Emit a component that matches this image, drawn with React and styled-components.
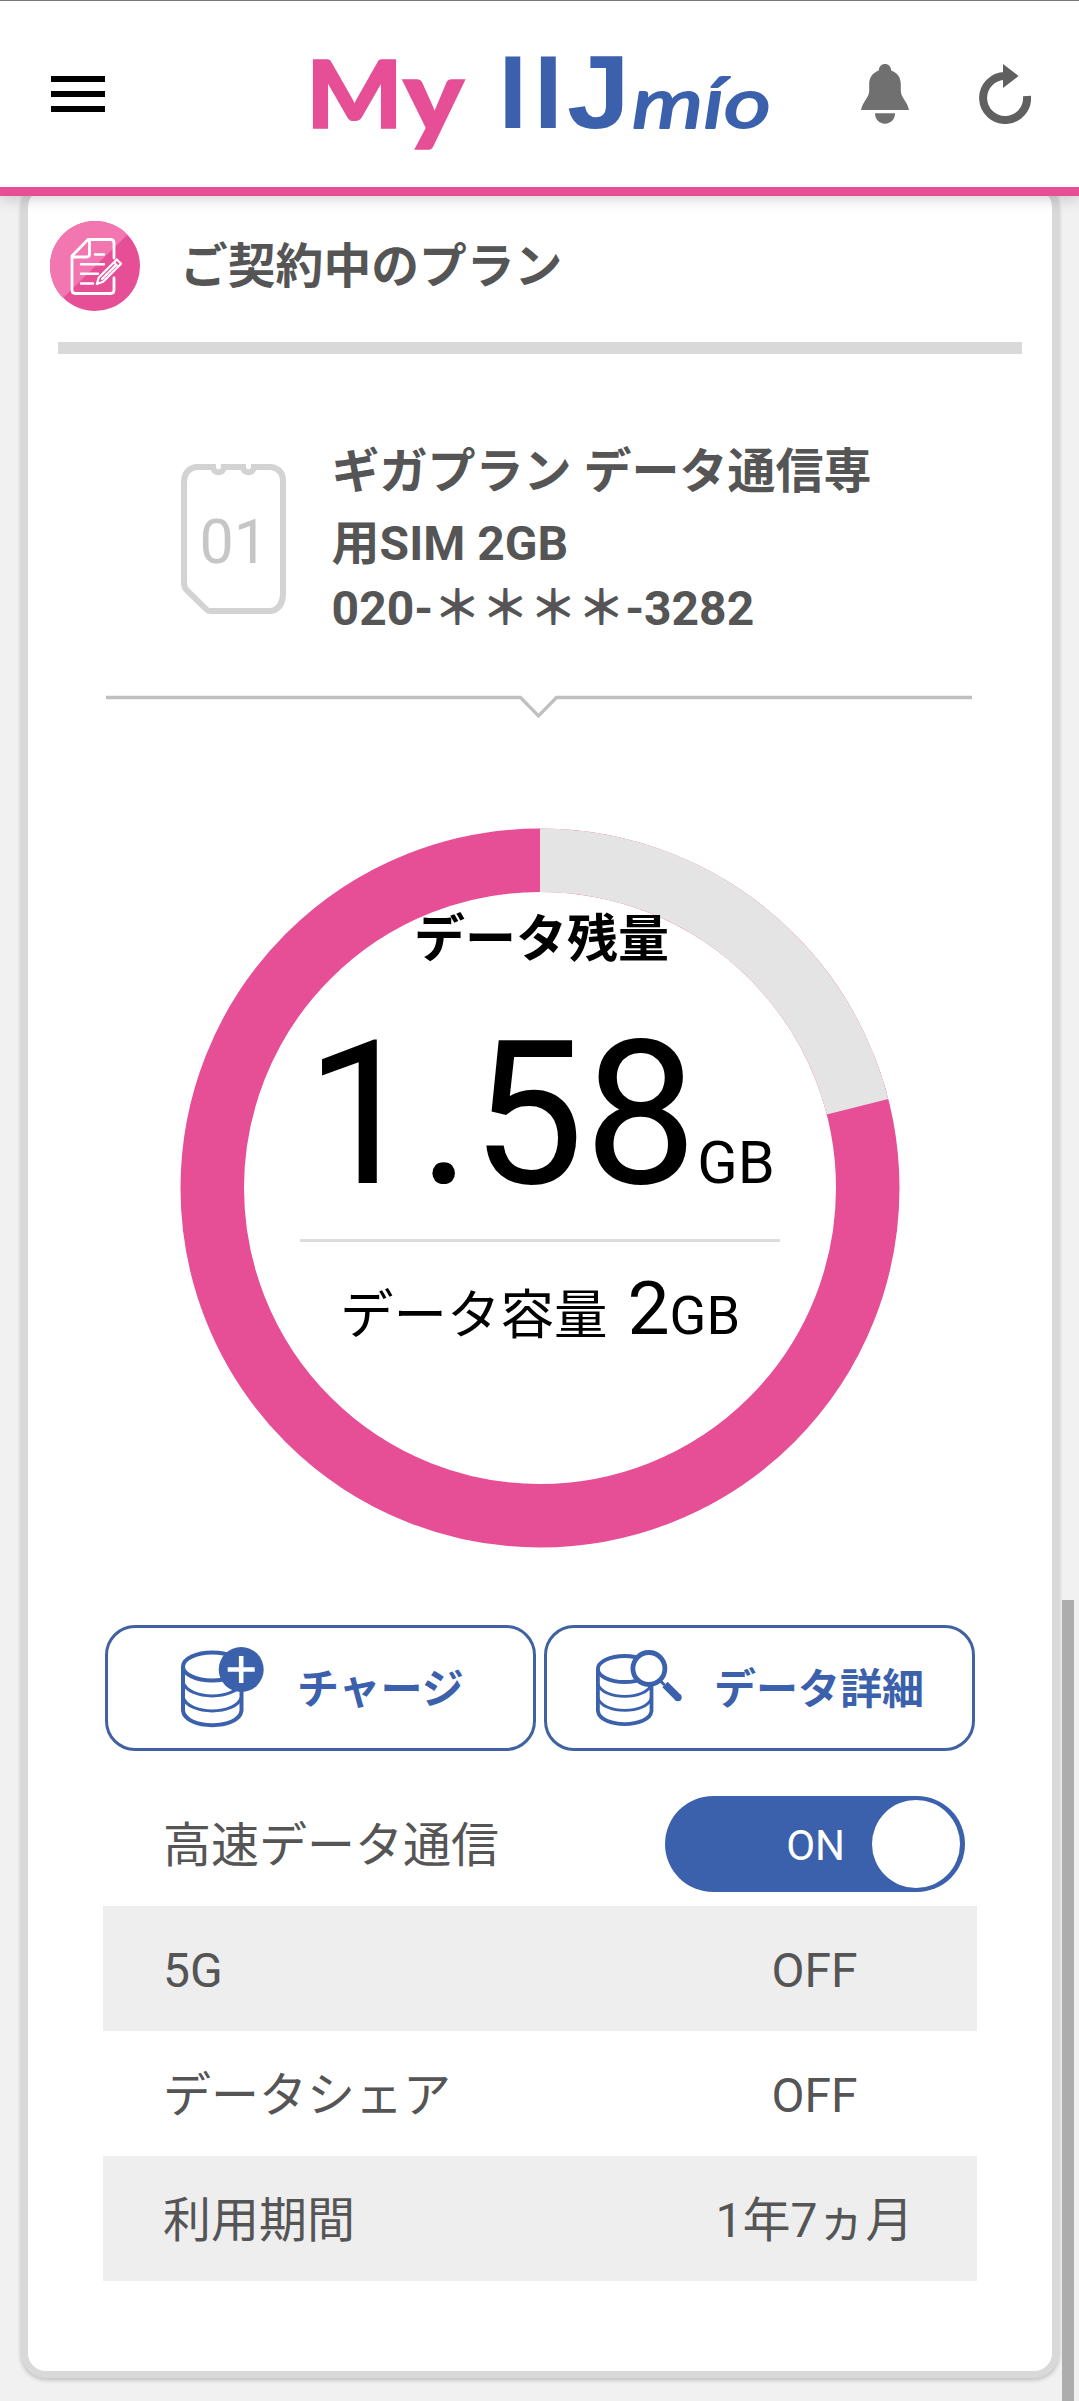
import React from 'react'
import styled, { createGlobalStyle } from "styled-components";


const rows = [
  { label: "5G", value: "OFF", shaded: true },
  { label: "データシェア", value: "OFF", shaded: false },
  { label: "利用期間", value: "1年7ヵ月", shaded: true },
]

const total = 2
const remain = 1.58
const ringRadius = 327.75
const ringLength = 2 * Math.PI * ringRadius
const usedLength = ringLength * (1 - remain / total)


function Logo() {
  return (
    <svg width="500" height="160" viewBox="290 14 500 160" role="img" aria-label="My IIJmio">
      <StLogoText x="306" y="128" fontSize="94" textLength="97" lengthAdjust="spacingAndGlyphs">M</StLogoText>
      <StLogoText x="403" y="132" fontSize="101" textLength="61" lengthAdjust="spacingAndGlyphs">y</StLogoText>
      <StLogoBlockText x="498.500 534" y="128" fontSize="103">II</StLogoBlockText>
      <StLogoBlockText x="567" y="128" fontSize="103" textLength="63" lengthAdjust="spacingAndGlyphs">J</StLogoBlockText>
      <StLogoScriptText x="632" y="128" fontSize="70" textLength="139" lengthAdjust="spacingAndGlyphs">mío</StLogoScriptText>
    </svg>
  )
}

function BellIcon() {
  return (
    <svg width="48" height="60" viewBox="0 0 48 60" fill="#707070">
      <path d="M24 0c-3.600 0-6 2.600-6.200 6.400C11.500 8.600 8.200 13.500 8.200 20v6c0 4-1.200 6.300-3.200 9.200C2.500 38.800.8 42 0 46h48c-.8-4-2.500-7.200-5-10.800-2-2.900-3.200-5.200-3.200-9.200v-6c0-6.500-3.300-11.400-9.600-13.600C30 2.600 27.600 0 24 0z" />
      <path d="M14 49.300h20c0 6-4.300 10.400-10 10.400s-10-4.400-10-10.400z" />
    </svg>
  )
}

function ReloadIcon() {
  return (
    <svg width="52" height="60" viewBox="0 0 52 60">
      <path d="M48 32A22 22 0 1 1 26 12" fill="none" stroke="#606060" strokeWidth="8" />
      <path d="M24 0l15.500 12L24 24z" fill="#606060" />
    </svg>
  )
}

function ContractIcon() {
  return (
    <svg width="90" height="90" viewBox="0 0 90 90">
      <circle cx="45" cy="45" r="45" fill="#e64e96" />
      <path d="M13 77A45 45 0 0 1 77.500 13.500z" fill="#f277b0" />
      <g fill="none" stroke="#fff" strokeWidth="2.800" strokeLinejoin="round" strokeLinecap="round">
        <path d="M64 37V22q0-3.500-3.500-3.500H38L22 35v34q0 3.500 3.500 3.500h35q3.500 0 3.500-3.500V57" />
        <path d="M39.500 19.500V33q0 3-3 3H23" />
        <path d="M45 33.500h9M31 43.300h23M31 52.700h17M31 62.500h12" strokeWidth="2.400" />
        <path d="M46.800 63l2-6.500 18-18 4.300 4.300-18 18zM64 41.500l4.200 4.200M52 58l13-13" strokeWidth="2.200" />
      </g>
    </svg>
  )
}

function SimIcon() {
  return (
    <svg width="105" height="150" viewBox="0 0 105 150">
      <path d="M15 3h17c0 7 11 7 11 0h19c0 7 11 7 11 0h17q12 2 12 14v114q-1 14-12 16H29q-2 0-3.500-1.500L5.500 126Q3 123 3 119V17Q4 5 15 3z" fill="none" stroke="#d3d3d3" strokeWidth="6" />
      <StSimText x="18.500" y="99">01</StSimText>
    </svg>
  )
}

function ChargeIcon() {
  return (
    <svg width="83" height="82" viewBox="0 0 83 82">
      <g fill="none" stroke="#3b61ad" strokeWidth="4">
        <ellipse cx="31.300" cy="19.500" rx="29.300" ry="14" />
        <path d="M2 19.500v44C4 83 58.500 83 60.500 63.500v-44" />
        <path d="M2 35c5 18.500 53.500 18.500 58.500 0M2 50c5 18.500 53.500 18.500 58.500 0" strokeWidth="3" />
      </g>
      <circle cx="60.200" cy="22.500" r="22.500" fill="#3b61ad" />
      <path d="M60.200 9v27M46.700 22.500h27" stroke="#fff" strokeWidth="4.600" />
    </svg>
  )
}

function DetailIcon() {
  return (
    <svg width="86" height="77" viewBox="0 0 86 77">
      <g fill="none" stroke="#3b61ad" strokeWidth="3.800">
        <ellipse cx="28.700" cy="19" rx="26.800" ry="13" />
        <path d="M1.900 19v42C3.900 78.500 53.500 78.500 55.500 61V19" />
        <path d="M1.900 34c5 16.500 48.600 16.500 53.600 0M1.900 48c5 16.500 48.600 16.500 53.600 0" strokeWidth="2.800" />
      </g>
      <circle cx="52.900" cy="18.500" r="16" fill="#fff" stroke="#3b61ad" strokeWidth="4.800" />
      <path d="M63.500 30l5 5" stroke="#3b61ad" strokeWidth="3" />
      <path d="M69 34.500l13.500 13.500" stroke="#3b61ad" strokeWidth="7.500" />
      <circle cx="82" cy="47.500" r="3.700" fill="#3b61ad" />
    </svg>
  )
}

function App() {
  return (
    <StPage>
      <GlobalStyle />
      <StHeader>
        <StMenuButton aria-label="メニュー"><StMenuBar /><StMenuBar /><StMenuBar /></StMenuButton>
        <StLogoBox><Logo /></StLogoBox>
        <StHeaderIcons>
          <BellIcon />
          <ReloadIcon />
        </StHeaderIcons>
      </StHeader>
      <StCard>
        <StCardTitle>
          <ContractIcon />
          <StH2>ご契約中のプラン</StH2>
        </StCardTitle>
        <StTitleRule />
        <StPlan>
          <StSimBox><SimIcon /></StSimBox>
          <div>
            <StPlanName>ギガプラン データ通信専<br />用SIM 2GB</StPlanName>
            <StPlanNumber>020-＊＊＊＊-3282</StPlanNumber>
          </div>
        </StPlan>
        <StNotchLine viewBox="0 0 866 26">
          <path d="M0 3.500h414.500l18 18.500 18-18.500H866" fill="none" stroke="#c0c0c0" strokeWidth="3.300" />
        </StNotchLine>
        <StMeter>
          <StRing viewBox="0 0 720 720">
            <circle cx="360" cy="360" r={ringRadius} fill="none" stroke="#e64e96" strokeWidth="63.500" />
            <circle cx="360" cy="360" r={ringRadius} fill="none" stroke="#e4e4e4" strokeWidth="63.500" strokeDasharray={`${usedLength} ${ringLength}`} transform="rotate(-90 360 360)" />
          </StRing>
          <StMeterBody>
            <StRemainLabel>データ残量</StRemainLabel>
            <StRemain>{remain}<StUnit $size="59.500px" $gap="0">GB</StUnit></StRemain>
            <StMeterRule />
            <StCapacity><StCapacityLabel>データ容量</StCapacityLabel>{total}<StUnit $size="54px" $gap="0">GB</StUnit></StCapacity>
          </StMeterBody>
        </StMeter>
        <StButtons>
          <StButton $pad="73px" $gap="33px"><ChargeIcon /><StButtonText>チャージ</StButtonText></StButton>
          <StButton $pad="49px" $gap="32px"><DetailIcon /><StButtonText>データ詳細</StButtonText></StButton>
        </StButtons>
        <StTable>
          <StRow>
            <StRowLabel>高速データ通信</StRowLabel>
            <StToggle role="switch" aria-checked="true"><StToggleText>ON</StToggleText><StKnob /></StToggle>
          </StRow>
          {rows.map((row) => (
            <StRow key={row.label} $shaded={row.shaded}>
              <StRowLabel>{row.label}</StRowLabel>
              <StRowValue>{row.value}</StRowValue>
            </StRow>
          ))}
        </StTable>
      </StCard>
      <StScrollThumb />
    </StPage>
  )
}


const GlobalStyle = createGlobalStyle`
  * {
    box-sizing: border-box;
  }
  body {
    margin: 0;
    background-color: #f1f1f1;
    font-family: Roboto, "Noto Sans CJK JP", sans-serif;
  }
  svg {
    display: block;
    flex-shrink: 0;
  }
`
const StPage = styled.div`
  position: relative;
  height: 2401px;
  overflow: hidden;
  color: #555;
`
const StHeader = styled.header`
  position: relative;
  z-index: 1;
  display: flex;
  align-items: center;
  height: 196px;
  padding: 0 48px 0 51px;
  background-color: #fff;
  border-top: 1px solid #777;
  border-bottom: 9px solid #e64e96;
  box-shadow: 0 3px 14px rgba(0, 0, 0, 0.18);
`
const StMenuButton = styled.button`
  display: flex;
  flex-direction: column;
  gap: 9px;
  width: 54px;
  padding: 0;
  border: 0;
  background: none;
`
const StMenuBar = styled.span`
  height: 6px;
  background-color: #000;
`
const StLogoBox = styled.div`
  margin-left: 185px;
`
const StLogoText = styled.text`
  font-family: Lato, sans-serif;
  font-weight: 900;
  fill: #e64e96;
  stroke: #e64e96;
  stroke-width: 1.5px;
`
const StLogoBlockText = styled.text`
  font-family: "Liberation Sans", sans-serif;
  font-weight: bold;
  fill: #3b61ad;
`
const StLogoScriptText = styled.text`
  font-family: Lato, sans-serif;
  font-weight: 400;
  font-style: italic;
  fill: #3b61ad;
  stroke: #3b61ad;
  stroke-width: 2px;
  stroke-linejoin: round;
`
const StHeaderIcons = styled.div`
  display: flex;
  gap: 70px;
  margin-left: auto;
`
const StCard = styled.section`
  width: 1038px;
  height: 2194px;
  margin: -14px 0 0 21px;
  padding-top: 2px;
  border: 7px solid #d9d9d9;
  border-radius: 25px;
  background-color: #fff;
  box-shadow: 0 2px 4px rgba(0, 0, 0, 0.22);
  height: 2196px;
`
const StCardTitle = styled.div`
  display: flex;
  align-items: center;
  gap: 40px;
  height: 151px;
  padding: 0 0 2px 22px;
`
const StH2 = styled.h2`
  margin: 0;
  padding-top: 3px;
  font-weight: bold;
  font-size: 47.800px;
  line-height: 60px;
`
const StTitleRule = styled.div`
  height: 12px;
  margin: 0 30px;
  background-color: #d9d9d9;
`
const StPlan = styled.div`
  display: flex;
  gap: 45.600px;
  padding: 82px 0 56px 153px;
  font-weight: bold;
  font-size: 48px;
`
const StSimBox = styled.div`
  padding-top: 28px;
`
const StSimText = styled.text`
  font-size: 61px;
  font-weight: 400;
  fill: #c6c6c6;
`
const StPlanName = styled.div`
  line-height: 72px;
`
const StPlanNumber = styled.div`
  line-height: 58px;
`
const StNotchLine = styled.svg`
  width: 866px;
  height: 26px;
  margin-left: 78px;
`
const StMeter = styled.div`
  display: grid;
  width: 720px;
  height: 720px;
  margin: 108px 0 0 152px;
  color: #000;
`
const StRing = styled.svg`
  grid-area: 1 / 1;
  width: 720px;
  height: 720px;
`
const StMeterBody = styled.div`
  grid-area: 1 / 1;
  z-index: 1;
  display: flex;
  flex-direction: column;
  align-items: center;
  padding-top: 82px;
`
const StRemainLabel = styled.div`
  padding-left: 3px;
  font-weight: bold;
  font-size: 51px;
  line-height: 60px;
`
const StRemain = styled.div`
  margin-top: 45px;
  font-size: 201px;
  line-height: 200px;
  white-space: nowrap;
`
const StUnit = styled.span`
  margin-left: ${({ $gap }) => $gap};
  font-size: ${({ $size }) => $size};
  line-height: 1;
`
const StMeterRule = styled.div`
  width: 480px;
  height: 3px;
  margin-top: 24px;
  background-color: #dcdcdc;
`
const StCapacity = styled.div`
  margin-top: 26px;
  font-size: 75px;
  line-height: 80px;
`
const StCapacityLabel = styled.span`
  margin-right: 20px;
  font-size: 53.500px;
  line-height: 1;
`
const StButtons = styled.div`
  display: flex;
  gap: 8px;
  margin: 77px 0 0 77px;
`
const StButton = styled.button`
  display: flex;
  align-items: center;
  gap: ${({ $gap }) => $gap};
  width: 431px;
  height: 126px;
  padding: 0 0 0 ${({ $pad }) => $pad};
  border: 3px solid #4062a0;
  border-radius: 30px;
  background-color: #fff;
  color: #3b61ad;
  font-family: inherit;
  font-weight: bold;
  font-size: 42px;
`
const StButtonText = styled.span`
  padding-top: 3px;
  line-height: 60px;
`
const StTable = styled.div`
  width: 874px;
  margin: 30px 0 0 75px;
`
const StRow = styled.div`
  display: flex;
  align-items: center;
  justify-content: space-between;
  height: 125px;
  padding-left: 60px;
  background-color: ${({ $shaded }) => ($shaded ? "#eee" : "#fff")};
  font-size: 48px;
  line-height: 60px;
`
const StRowLabel = styled.span`
  padding-top: 4px;
`
const StRowValue = styled.span`
  width: 326px;
  padding: 4px 0 0 1px;
  text-align: center;
`
const StToggle = styled.div`
  display: flex;
  align-items: center;
  justify-content: flex-end;
  gap: 27px;
  width: 300px;
  height: 96px;
  margin-right: 12px;
  padding-right: 5px;
  border-radius: 48px;
  background-color: #3b61ad;
  color: #fff;
  font-size: 42px;
`
const StToggleText = styled.span`
  padding-top: 5px;
`
const StKnob = styled.span`
  width: 88px;
  height: 88px;
  border-radius: 50%;
  background-color: #fff;
`
const StScrollThumb = styled.div`
  position: absolute;
  top: 1600px;
  right: 5px;
  width: 12px;
  height: 801px;
  background-color: #adadad;
`


export default App
